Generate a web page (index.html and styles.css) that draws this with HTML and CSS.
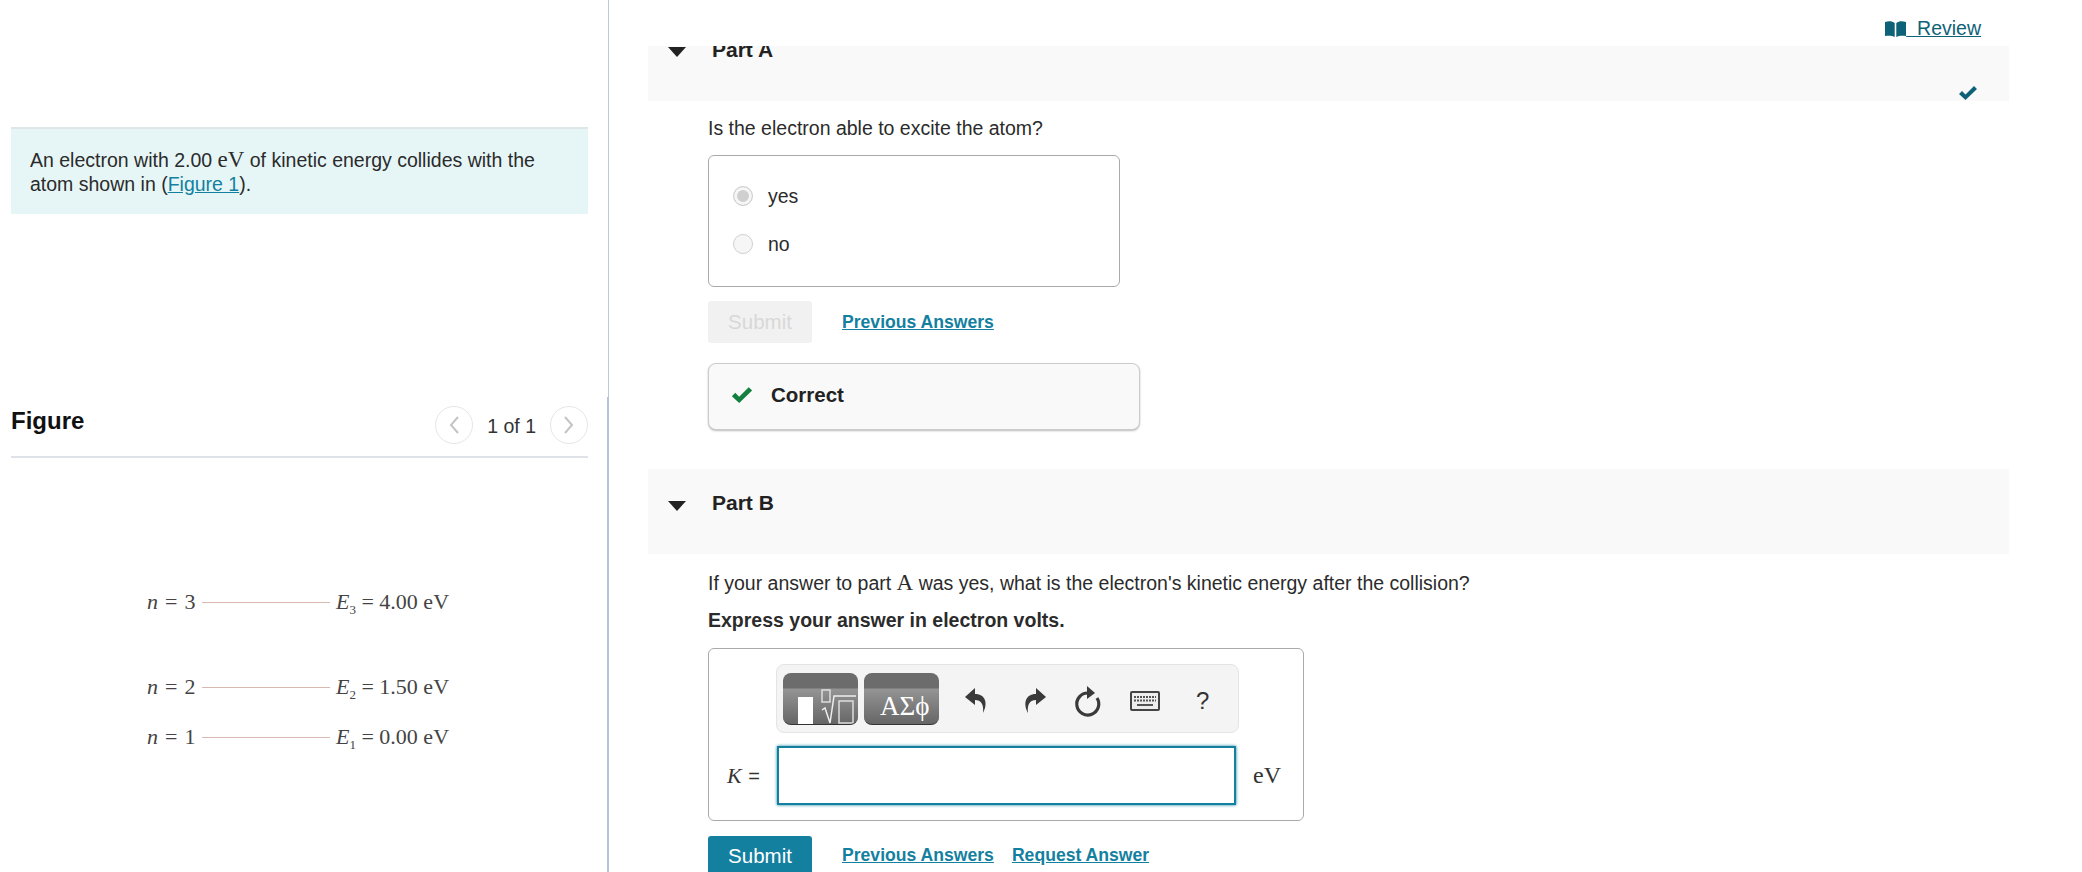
FILE: index.html
```html
<!DOCTYPE html>
<html lang="en">
<head>
    <meta charset="UTF-8">
    <title>Part A and Part B</title>
    <link rel="stylesheet" href="styles.css">
</head>
<body>
    <div class="page">
        <!-- Left column: problem text and figure -->
        <div class="left">
            <div class="intro">An electron with 2.00 <span class="math">eV</span> of kinetic energy collides with the atom shown in (<a href="#">Figure 1</a>).</div>

            <div class="figure-head">
                <div class="figure-title">Figure</div>
                <div class="pager">
                    <button class="page-btn"><svg width="12" height="20" viewBox="0 0 12 20"><path d="M10 2L3 10l7 8" fill="none" stroke="#c4c4c4" stroke-width="2"/></svg></button>
                    <span class="page-count">1 of 1</span>
                    <button class="page-btn"><svg width="12" height="20" viewBox="0 0 12 20"><path d="M2 2l7 8-7 8" fill="none" stroke="#c4c4c4" stroke-width="2"/></svg></button>
                </div>
            </div>

            <div class="levels">
                <div class="level level-3"><span class="level-n"><i>n</i> = 3</span><span class="level-line"></span><span class="level-e"><i>E</i><sub>3</sub> = 4.00 eV</span></div>
                <div class="level level-2"><span class="level-n"><i>n</i> = 2</span><span class="level-line"></span><span class="level-e"><i>E</i><sub>2</sub> = 1.50 eV</span></div>
                <div class="level level-1"><span class="level-n"><i>n</i> = 1</span><span class="level-line"></span><span class="level-e"><i>E</i><sub>1</sub> = 0.00 eV</span></div>
            </div>
        </div>

        <!-- Right column: the parts -->
        <div class="right">
            <div class="topbar">
                <a class="review" href="#">
                    <svg width="21" height="16" viewBox="0 0 21 16"><path d="M0 1c4-1 7-1 9.700 1v14C7 14.500 4 14.500 0 15zM21 1c-4-1-7-1-9.700 1v14c2.700-1.500 5.700-1.500 9.700-1z" fill="#0e6278"/></svg>
                    &nbsp;Review</a>
            </div>

            <div class="scroller">
                <div class="part-bar part-a">
                    <svg class="arrow" width="18" height="10" viewBox="0 0 18 10"><path d="M0 0h18L9 10z" fill="#222"/></svg>
                    <span class="part-title">Part A</span>
                    <svg class="done" width="20" height="16" viewBox="0 0 20 16"><path d="M1 9l3-3 3.500 3.500L16 1l3 3L7.500 15z" fill="#0e6278"/></svg>
                </div>

                <div class="part-body">
                    <p class="question q-a">Is the electron able to excite the atom?</p>
                    <div class="choices">
                        <div class="choice"><span class="radio checked"></span>yes</div>
                        <div class="choice"><span class="radio"></span>no</div>
                    </div>
                    <div class="actions actions-a">
                        <button class="submit" disabled>Submit</button>
                        <a class="action-link" href="#">Previous Answers</a>
                    </div>
                    <div class="feedback">
                        <svg width="24" height="18" viewBox="0 0 20 16"><path d="M1 9l3-3 3.500 3.500L16 1l3 3L7.500 15z" fill="#14803f"/></svg>
                        <span>Correct</span>
                    </div>
                </div>

                <div class="part-bar part-b">
                    <svg class="arrow" width="18" height="10" viewBox="0 0 18 10"><path d="M0 0h18L9 10z" fill="#222"/></svg>
                    <span class="part-title">Part B</span>
                </div>

                <div class="part-body">
                    <p class="question q-b">If your answer to part <span class="math">A</span> was yes, what is the electron's kinetic energy after the collision?</p>
                    <p class="express">Express your answer in electron volts.</p>
                    <div class="answer-box">
                        <div class="toolbar">
                            <div class="tpl-btn">
                                <svg width="75" height="52" viewBox="0 0 75 52">
                                    <rect x="15" y="24" width="15" height="28" fill="#fff"/>
                                    <rect x="39" y="17" width="8" height="12" fill="none" stroke="#ddd" stroke-width="1.500"/>
                                    <path d="M39 37l3-2 5 15 4-27h22" fill="none" stroke="#eee" stroke-width="1.500"/>
                                    <rect x="56" y="28" width="14" height="22" fill="none" stroke="#ddd" stroke-width="1.500"/>
                                </svg>
                            </div>
                            <div class="tpl-btn greek">ΑΣϕ</div>
                            <svg class="tool undo" width="24" height="28" viewBox="0 0 24 28"><path d="M11 1L1 10l10 8v-5c6 0 9 4 8 13 5-9 3-19-8-19z" fill="#3a3a3a"/></svg>
                            <svg class="tool redo" width="24" height="28" viewBox="0 0 24 28"><path d="M13 1l10 9-10 8v-5c-6 0-9 4-8 13-5-9-3-19 8-19z" fill="#3a3a3a"/></svg>
                            <svg class="tool reset" width="28" height="34" viewBox="0 0 28 34"><path d="M14 9A11 11 0 1 0 23 14" fill="none" stroke="#3a3a3a" stroke-width="3.200"/><path d="M13 2l8 7-8 6z" fill="#3a3a3a"/></svg>
                            <svg class="tool kbd" width="30" height="20" viewBox="0 0 30 20"><rect x="1" y="1" width="28" height="18" rx="1" fill="#eee" stroke="#444" stroke-width="2"/><path d="M4 6h22M4 9.500h22" stroke="#555" stroke-width="2" stroke-dasharray="2 1"/><path d="M7 14h16" stroke="#555" stroke-width="2"/></svg>
                            <span class="tool help">?</span>
                        </div>
                        <div class="input-row">
                            <span class="var"><i>K</i> <span class="eq">=</span></span>
                            <div class="answer-input"></div>
                            <span class="unit">eV</span>
                        </div>
                    </div>
                    <div class="actions actions-b">
                        <button class="submit active">Submit</button>
                        <a class="action-link" href="#">Previous Answers</a>
                        <a class="action-link second" href="#">Request Answer</a>
                    </div>
                </div>
            </div>
        </div>
    </div>
</body>
</html>
```

FILE: styles.css
```css
html, body {
    margin: 0;
    padding: 0;
    height: 100%;
    overflow: hidden;
    background-color: #fff;
}
body {
    font-family: "Liberation Sans", Arial, sans-serif;
    font-size: 19.5px;
    color: #2b2b2b;
}
a {
    color: #14809f;
}
.page {
    display: flex;
    height: 872px;
}
.math {
    font-family: "Liberation Serif", serif;
    font-size: 23px;
}

/* left column */
.left {
    position: relative;
    width: 577px;
    padding: 127px 20px 0 11px;
    flex-shrink: 0;
    border-right: 1px solid #bccbda;
}
/* the divider gets thicker and darker below the problem text */
.left::after {
    content: "";
    position: absolute;
    top: 397px;
    right: -1px;
    bottom: 0;
    width: 2px;
    background-color: #b4c4d6;
}
.intro {
    background-color: #e6f6f7;
    border-top: 2px solid #dfe6e8;
    padding: 19px 40px 18px 19px;
    line-height: 24px;
    height: 48px;
}
.figure-head {
    display: flex;
    justify-content: space-between;
    align-items: center;
    margin-top: 186px;
    height: 56px;
    border-bottom: 2px solid #dfe3e8;
}
.figure-title {
    font-size: 24px;
    font-weight: bold;
    color: #111;
    margin-top: -14px;
}
.pager {
    display: flex;
    align-items: center;
    margin-top: -6px;
}
.page-btn {
    display: flex;
    align-items: center;
    justify-content: center;
    width: 38px;
    height: 38px;
    padding: 0;
    background-color: #fff;
    border: 1px solid #e6e6e6;
    border-radius: 50%;
}
.page-count {
    margin: 3px 14px 0;
    color: #333;
}
.levels {
    padding: 131px 0 0 136px;
    font-family: "Liberation Serif", serif;
    font-size: 22px;
    color: #444;
}
.level {
    display: flex;
    align-items: center;
    height: 26px;
}
.level-2 {
    margin-top: 59px;
}
.level-1 {
    margin-top: 24px;
}
.level-n {
    width: 55px;
    word-spacing: 1.500px;
    white-space: nowrap;
}
.level-line {
    width: 128px;
    height: 1px;
    background-color: #d8b8b0;
}
.level-e {
    margin-left: 6px;
    white-space: nowrap;
}
.level sub {
    font-size: 13px;
    line-height: 0;
}

/* right column */
.right {
    flex: 1;
    display: flex;
    flex-direction: column;
    min-width: 0;
    padding: 0 73px 0 39px;
}
.topbar {
    height: 46px;
    flex-shrink: 0;
    display: flex;
    justify-content: flex-end;
    padding-right: 28px;
}
.review {
    margin-top: 17px;
    height: 24px;
    color: #0e6278;
    font-size: 19.5px;
}
.review svg {
    vertical-align: -2px;
}
.scroller {
    flex: 1;
    overflow: hidden;
}
.part-bar {
    display: flex;
    background-color: #f9f9f9;
    padding-left: 20px;
}
.part-a {
    margin-top: -15px;
    height: 70px;
    padding-top: 6px;
    box-sizing: border-box;
}
.part-a .part-title {
    margin-top: 1px;
}
.part-b {
    margin-top: 39px;
    height: 85px;
    padding-top: 22px;
    box-sizing: border-box;
}
.arrow {
    margin-top: 10px;
}
.part-title {
    margin-left: 26px;
    font-size: 21px;
    font-weight: bold;
    color: #222;
    line-height: 24px;
}
.done {
    margin-left: auto;
    margin-right: 31px;
    margin-top: 48px;
}
.part-body {
    padding-left: 60px;
}
.question {
    margin: 0;
    line-height: 24px;
}
.q-a {
    margin-top: 15px;
}
.q-b {
    margin-top: 17px;
}
.express {
    margin: 13px 0 0;
    font-weight: bold;
    line-height: 24px;
}
.choices {
    width: 412px;
    height: 132px;
    margin-top: 15px;
    border: 1px solid #aaa;
    border-radius: 6px;
    padding-top: 16px;
    box-sizing: border-box;
}
.choice {
    display: flex;
    align-items: center;
    height: 48px;
    padding-left: 24px;
}
.radio {
    width: 18px;
    height: 18px;
    margin-right: 15px;
    border: 1px solid #d0d0d0;
    border-radius: 50%;
    background-color: #f6f6f6;
}
.radio.checked {
    background-color: #cfcfcf;
    box-shadow: inset 0 0 0 3px #f6f6f6;
}
.actions {
    display: flex;
    align-items: center;
}
.actions-a {
    margin-top: 14px;
}
.actions-b {
    margin-top: 15px;
}
.actions-b .action-link {
    margin-top: -3px;
}
.submit {
    width: 104px;
    height: 42px;
    padding: 0;
    border: none;
    border-radius: 3px;
    font-family: inherit;
    font-size: 20.5px;
    color: #d8d8d8;
    background-color: #f1f1f1;
}
.submit.active {
    padding-bottom: 3px;
    color: #fff;
    background-color: #14809f;
}
.action-link {
    margin-left: 30px;
    font-size: 17.6px;
    font-weight: bold;
}
.action-link.second {
    margin-left: 18px;
}
.feedback {
    display: flex;
    align-items: center;
    height: 67px;
    margin-top: 20px;
    padding-left: 21px;
    box-sizing: border-box;
    width: 432px;
    background-color: #f9f9f9;
    border: 1px solid #ccc;
    border-radius: 8px;
    box-shadow: 0 1px 2px #bbb;
    font-size: 20.5px;
    font-weight: bold;
    color: #222;
}
.feedback span {
    margin-left: 17px;
    margin-top: -4px;
}
.feedback svg {
    margin-top: -4px;
}
.answer-box {
    width: 596px;
    height: 173px;
    margin-top: 16px;
    border: 1px solid #aaa;
    border-radius: 6px;
    padding: 15px 0 0 67px;
    box-sizing: border-box;
}
.toolbar {
    display: flex;
    align-items: center;
    width: 463px;
    height: 69px;
    padding-left: 6px;
    box-sizing: border-box;
    background-color: #f4f4f4;
    border: 1px solid #e4e4e4;
    border-radius: 8px;
}
.tpl-btn {
    width: 75px;
    height: 52px;
    margin-right: 6px;
    border-radius: 8px;
    overflow: hidden;
    box-sizing: border-box;
    border-bottom: 1px solid #333;
    background: linear-gradient(#6c6c6c 0, #6c6c6c 15px, #949494 16px, #666 100%);
}
.tpl-btn.greek {
    padding: 17px 0 0 16px;
    font-family: "Liberation Serif", serif;
    font-size: 27px;
    line-height: 32px;
    color: #fff;
    white-space: nowrap;
}
.tool {
    flex-shrink: 0;
    margin-top: 4px;
}
.undo {
    margin-left: 19px;
}
.redo {
    margin-left: 35px;
}
.reset {
    margin-left: 27px;
}
.kbd {
    margin-left: 28px;
}
.help {
    margin-left: 36px;
    font-size: 24px;
    color: #333;
}
.input-row {
    display: flex;
    align-items: center;
    margin-top: 13px;
    margin-left: -49px;
}
.var {
    width: 50px;
    font-family: "Liberation Serif", serif;
    font-size: 22px;
    color: #333;
    white-space: nowrap;
}
.var .eq {
    font-family: "Liberation Sans", sans-serif;
    font-size: 20px;
    margin-left: 1px;
}
.answer-input {
    width: 459px;
    height: 59px;
    box-sizing: border-box;
    background-color: #fff;
    border: 2px solid #14809f;
    box-shadow: 0 0 3px #14809f;
}
.unit {
    margin-left: 17px;
    font-family: "Liberation Serif", serif;
    font-size: 24px;
    color: #333;
}
```
